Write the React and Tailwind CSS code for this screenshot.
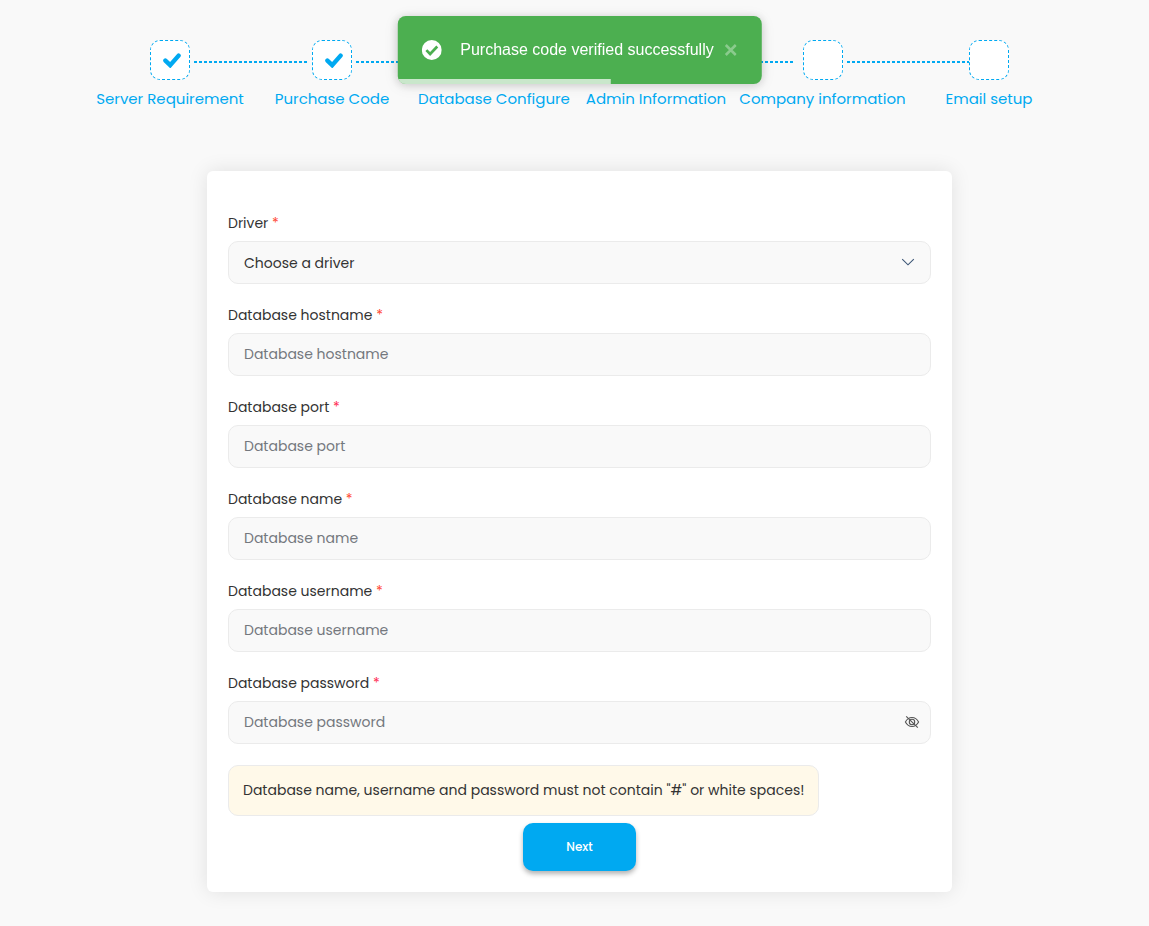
import React, { useState } from 'react';

const steps = [
  { label: 'Server Requirement', done: true },
  { label: 'Purchase Code', done: true },
  { label: 'Database Configure', done: false },
  { label: 'Admin Information', done: false },
  { label: 'Company information', done: false },
  { label: 'Email setup', done: false },
];

const fields = [
  { id: 'hostname', label: 'Database hostname', star: 'text-[#ff4a35]' },
  { id: 'port', label: 'Database port', star: 'text-[#ff2d55]' },
  { id: 'name', label: 'Database name', star: 'text-[#ff4a35]' },
  { id: 'username', label: 'Database username', star: 'text-[#ff4a35]' },
];

const inputClass =
  'block w-full h-[43px] rounded-[10px] border border-[#ebebeb] bg-[#f9f9f9] px-[15px] text-sm text-[#333] placeholder:text-[#74787e] outline-none focus:border-[#00a9f1]';

function Toast({ onClose }) {
  return (
    <div
      role="status"
      className="fixed top-4 left-1/2 z-10 ml-[5px] flex h-[68px] -translate-x-1/2 items-center overflow-hidden rounded-lg bg-[#4caf50] pr-[23px] pl-6 font-['Liberation_Sans',sans-serif] text-white shadow-[0_1px_10px_rgba(0,0,0,0.15),0_2px_15px_rgba(0,0,0,0.08)]"
    >
      <svg viewBox="0 0 24 24" className="h-5 w-5 shrink-0" aria-hidden="true">
        <circle cx="12" cy="12" r="12" fill="#fff" />
        <path d="M5.5 12.2l4.5 4.6 8.6-9" fill="none" stroke="#4caf50" strokeWidth="3.2" />
      </svg>
      <span className="ml-[19px] whitespace-nowrap text-base">Purchase code verified successfully</span>
      <button type="button" aria-label="Close" onClick={onClose} className="ml-[9px] p-[2px] text-white/35">
        <svg viewBox="0 0 12 12" className="h-3 w-3" aria-hidden="true">
          <path d="M1 1l10 10M11 1L1 11" fill="none" stroke="currentColor" strokeWidth="2.6" />
        </svg>
      </button>
      <div className="absolute bottom-0 left-0 h-[5px] w-[213px] bg-white/70" />
    </div>
  );
}

function Stepper() {
  return (
    <ol className="mx-auto grid w-full max-w-[981px] grid-cols-[162fr_162fr_162fr_162fr_171fr_162fr]">
      {steps.map((step, i) => (
        <li key={step.label} className="relative flex flex-col items-center">
          <span className="flex h-10 w-10 items-center justify-center rounded-[10px] border border-dashed border-[#00a9f1] bg-white">
            {step.done && (
              <svg viewBox="0 0 18 15" className="ml-[3px] h-[15px] w-[18px]" aria-hidden="true">
                <path d="M2.4 7.6L7.2 12.2L15.6 2.6" fill="none" stroke="#00a9f1" strokeWidth="4.4" strokeLinecap="round" />
              </svg>
            )}
          </span>
          {/* Connector to the next step */}
          {i < steps.length - 1 && (
            <span className="absolute top-[21px] left-[calc(50%+24px)] h-[2px] w-[calc(100%-48px)] bg-[repeating-linear-gradient(90deg,#00a9f1_0_3px,transparent_3px_5px)]" />
          )}
          <span className="mt-[7px] whitespace-nowrap text-[15px] leading-6 text-[#00a9f1]">{step.label}</span>
        </li>
      ))}
    </ol>
  );
}

function Label({ htmlFor, star, children }) {
  return (
    <label htmlFor={htmlFor} className="mb-[6px] block text-sm leading-[23px] text-[#333]">
      {children} <span className={star}>*</span>
    </label>
  );
}

function App() {
  const [toastOpen, setToastOpen] = useState(true);
  const [showPassword, setShowPassword] = useState(false);

  return (
    <div className="min-h-screen bg-[#f9f9f9] pt-10 pb-[34px] pl-[10px] font-['Poppins','Inter',sans-serif]">
      {toastOpen && <Toast onClose={() => setToastOpen(false)} />}
      <Stepper />

      {/* Database form */}
      <form
        onSubmit={(e) => e.preventDefault()}
        className="mx-auto mt-[60px] w-full max-w-[745px] rounded-md bg-white px-[21px] pt-[41px] pb-[21px] shadow-[0_0_20px_rgba(0,0,0,0.1)]"
      >
        <div className="mb-5">
          <Label htmlFor="driver" star="text-[#ff4a35]">Driver</Label>
          <div className="relative">
            <select id="driver" defaultValue="" className={`${inputClass} appearance-none`}>
              <option value="">Choose a driver</option>
              <option value="mysql">MySQL</option>
              <option value="pgsql">PostgreSQL</option>
            </select>
            <svg viewBox="0 0 14 8" className="pointer-events-none absolute top-[17px] right-4 h-2 w-[14px]" aria-hidden="true">
              <path d="M1.2 1.2L7 6.8l5.8-5.6" fill="none" stroke="#3c5575" strokeWidth="1.1" />
            </svg>
          </div>
        </div>

        {fields.map((field) => (
          <div key={field.id} className="mb-5">
            <Label htmlFor={field.id} star={field.star}>{field.label}</Label>
            <input id={field.id} type="text" placeholder={field.label} className={inputClass} />
          </div>
        ))}

        <div className="mb-[21px]">
          <Label htmlFor="password" star="text-[#ff2d55]">Database password</Label>
          <div className="relative">
            <input
              id="password"
              type={showPassword ? 'text' : 'password'}
              placeholder="Database password"
              className={inputClass}
            />
            <button
              type="button"
              aria-label="Toggle password"
              onClick={() => setShowPassword(!showPassword)}
              className="absolute top-[14px] right-[11px] text-[#555]"
            >
              <svg viewBox="0 0 16 14" className="h-[14px] w-4" fill="none" stroke="currentColor" strokeWidth="1.1" aria-hidden="true">
                <path d="M1.4 7C3 4 5.3 2.5 8 2.5S13 4 14.6 7C13 10 10.7 11.5 8 11.5S3 10 1.4 7z" />
                <circle cx="8" cy="7" r="2.7" />
                <path d="M2.2 1.3l11.6 11.4" />
              </svg>
            </button>
          </div>
        </div>

        <p className="w-fit rounded-[10px] border border-[#ebebeb] bg-[#fff9e9] p-[14px] text-sm leading-[21px] text-[#333]">
          Database name, username and password must not contain "#" or white spaces!
        </p>
        <button
          type="submit"
          className="mx-auto mt-[7px] block h-12 w-[113px] rounded-[10px] bg-[#00a9f1] text-xs font-medium text-white shadow-[0_3px_5px_rgba(0,0,0,0.3)]"
        >
          Next
        </button>
      </form>
    </div>
  );
}

export default App;
